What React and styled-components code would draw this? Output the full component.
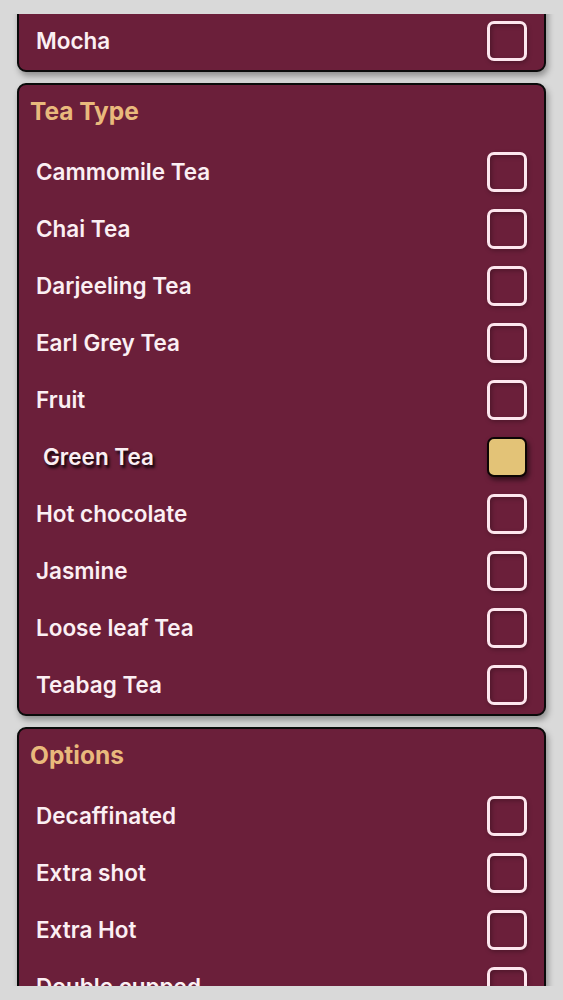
import React, { useLayoutEffect, useRef, useState } from 'react';
import styled, { createGlobalStyle } from 'styled-components';

const GlobalStyle = createGlobalStyle`
    html, body {
        margin: 0;
        padding: 0;
        background: #d9d9d9;
        font-family: "Inter", "Roboto", "Liberation Sans", sans-serif;
    }
`;

const sections = [
    {
        title: 'Coffee Type',
        items: ['Americano', 'Cappuccino', 'Espresso', 'Flat White', 'Latte', 'Macchiato', 'Mocha'],
    },
    {
        title: 'Tea Type',
        items: [
            'Cammomile Tea',
            'Chai Tea',
            'Darjeeling Tea',
            'Earl Grey Tea',
            'Fruit',
            'Green Tea',
            'Hot chocolate',
            'Jasmine',
            'Loose leaf Tea',
            'Teabag Tea',
        ],
    },
    {
        title: 'Options',
        items: ['Decaffinated', 'Extra shot', 'Extra Hot', 'Double cupped', 'Oat milk', 'Soy milk'],
    },
];

const App = () => {
    const [selected, setSelected] = useState({ 'Green Tea': true });
    const scrollRef = useRef(null);

    useLayoutEffect(() => {
        if (scrollRef.current) {
            scrollRef.current.scrollTop = 404;
        }
    }, []);

    const toggle = (name) => {
        setSelected((prev) => ({ ...prev, [name]: !prev[name] }));
    };

    return (
        <>
            <GlobalStyle />
            <Page>
                <Viewport ref={scrollRef}>
                    {sections.map((section) => (
                        <Card key={section.title}>
                            <CardTitle>{section.title}</CardTitle>
                            {section.items.map((item) => (
                                <Row key={item} onClick={() => toggle(item)}>
                                    <Label active={selected[item]}>{item}</Label>
                                    <Box active={selected[item]} />
                                </Row>
                            ))}
                        </Card>
                    ))}
                </Viewport>
            </Page>
        </>
    );
};

const Page = styled.div`
    height: 1000px;
    padding: 14px 0 0;
    box-sizing: border-box;
`;

const Viewport = styled.div`
    height: 972px;
    overflow-y: auto;
    padding: 0 17px;
    display: flex;
    flex-direction: column;
    gap: 11px;
    scrollbar-width: none;
    &::-webkit-scrollbar {
        display: none;
    }
`;

const Card = styled.div`
    flex-shrink: 0;
    background: #6b1f3a;
    border: 2px solid #0a0a0a;
    border-radius: 9px;
    padding: 12px 0 1px;
    box-shadow: 2px 4px 6px rgba(0, 0, 0, 0.35);
`;

const CardTitle = styled.h2`
    margin: 0 0 18px 11px;
    height: 28px;
    line-height: 28px;
    font-size: 24.5px;
    font-weight: 700;
    color: #e9b97c;
`;

const Row = styled.div`
    height: 57px;
    display: flex;
    align-items: center;
    justify-content: space-between;
    padding: 0 17px;
    cursor: pointer;
`;

const Label = styled.span`
    font-size: 22.5px;
    font-weight: 600;
    color: #fbeff3;
    padding-left: ${(p) => (p.active ? '7px' : '0')};
    text-shadow: ${(p) => (p.active ? '2px 3px 3px rgba(0, 0, 0, 0.9)' : 'none')};
`;

const Box = styled.span`
    width: 40px;
    height: 40px;
    box-sizing: border-box;
    border-radius: 7px;
    border: ${(p) => (p.active ? '2px solid #0d0505' : '3px solid #fde6ee')};
    background: ${(p) => (p.active ? '#e3c377' : 'transparent')};
    box-shadow: ${(p) =>
        p.active
            ? '2px 3px 5px rgba(0, 0, 0, 0.55)'
            : 'inset 2px 2px 4px rgba(0, 0, 0, 0.25), 1px 2px 4px rgba(0, 0, 0, 0.25)'};
`;

export default App;
